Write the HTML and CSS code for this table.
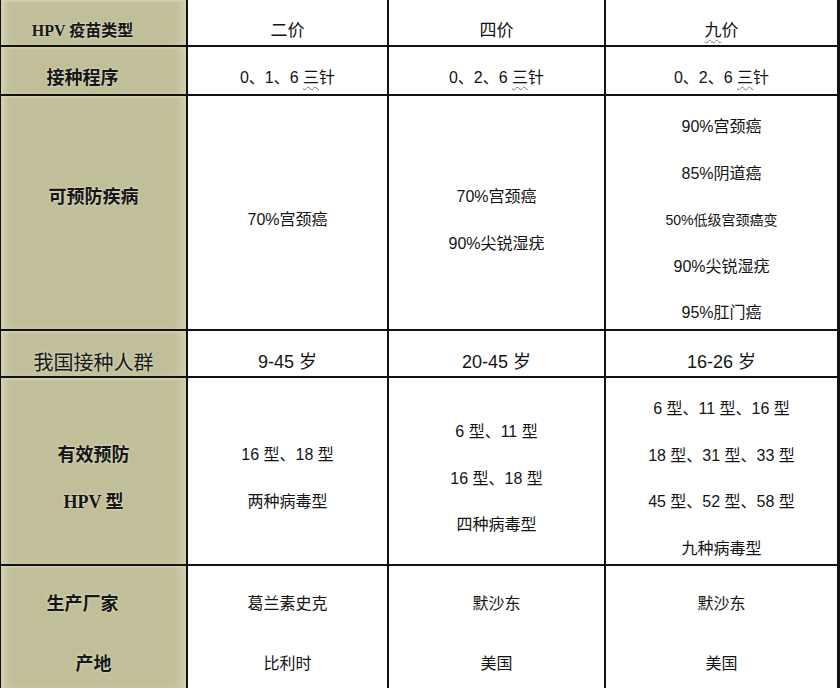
FILE: index.html
```html
<!DOCTYPE html>
<html lang="zh-CN">
<head>
<meta charset="utf-8">
<title>HPV 疫苗类型</title>
<link rel="stylesheet" href="styles.css">
</head>
<body>
<div class="table">
  <div class="cell head"><div class="ln shift">HPV 疫苗类型</div></div>
  <div class="cell"><div class="ln top">二价</div></div>
  <div class="cell"><div class="ln top">四价</div></div>
  <div class="cell"><div class="ln top"><span class="wavy">九</span>价</div></div>

  <div class="cell head"><div class="ln big shift">接种程序</div></div>
  <div class="cell"><div class="ln">0、1、6 <span class="wavy">三</span>针</div></div>
  <div class="cell"><div class="ln">0、2、6 <span class="wavy">三</span>针</div></div>
  <div class="cell"><div class="ln">0、2、6 <span class="wavy">三</span>针</div></div>

  <div class="cell head"><div class="ln big">可预防疾病</div><div class="ln"></div></div>
  <div class="cell"><div class="ln">70%宫颈癌</div></div>
  <div class="cell"><div class="ln">70%宫颈癌</div><div class="ln">90%尖锐湿疣</div></div>
  <div class="cell">
    <div class="ln">90%宫颈癌</div>
    <div class="ln">85%阴道癌</div>
    <div class="ln small">50%低级宫颈癌变</div>
    <div class="ln">90%尖锐湿疣</div>
    <div class="ln">95%肛门癌</div>
  </div>

  <div class="cell head"><div class="ln plain">我国接种人群</div></div>
  <div class="cell"><div class="ln age">9-45 岁</div></div>
  <div class="cell"><div class="ln age">20-45 岁</div></div>
  <div class="cell"><div class="ln age">16-26 岁</div></div>

  <div class="cell head"><div class="ln big">有效预防</div><div class="ln big">HPV 型</div></div>
  <div class="cell"><div class="ln">16 型、18 型</div><div class="ln">两种病毒型</div></div>
  <div class="cell"><div class="ln">6 型、11 型</div><div class="ln">16 型、18 型</div><div class="ln">四种病毒型</div></div>
  <div class="cell">
    <div class="ln">6 型、11 型、16 型</div>
    <div class="ln">18 型、31 型、33 型</div>
    <div class="ln">45 型、52 型、58 型</div>
    <div class="ln">九种病毒型</div>
  </div>

  <div class="cell head last"><div class="ln big shift">生产厂家</div><div class="ln big">产地</div></div>
  <div class="cell last"><div class="ln">葛兰素史克</div><div class="ln">比利时</div></div>
  <div class="cell last"><div class="ln">默沙东</div><div class="ln">美国</div></div>
  <div class="cell last"><div class="ln">默沙东</div><div class="ln">美国</div></div>
</div>
</body>
</html>
```
FILE: styles.css
```css
html, body {
  margin: 0;
  padding: 0;
  background: #ffffff;
}

.table {
  width: 840px;
  height: 688px;
  box-sizing: border-box;
  display: grid;
  grid-template-columns: 185px 199px 215px 231px;
  grid-template-rows: 45px 47px 233px 45px 186px 1fr;
  gap: 2px;
  padding: 0 3px 0 1px;
  background: #111111;
  overflow: hidden;
  font-family: "Liberation Sans", "Noto Sans CJK SC", sans-serif;
  color: #141414;
}

.cell {
  background: #ffffff;
  display: flex;
  flex-direction: column;
  justify-content: center;
  align-items: center;
  font-size: 16px;
}

.cell.head {
  background: #c1bf99;
  box-shadow: inset 7px 0 6px -3px #d6d4b8, inset -10px 0 8px -5px #d2d0b2, inset 0 2px 2px -1px #d8d6bd;
  font-family: "Liberation Serif", "Noto Sans CJK SC", serif;
  font-weight: bold;
  color: #161616;
}

.cell.last {
  justify-content: flex-start;
  padding-top: 7px;
  gap: 13px;
}

.ln {
  height: 46.6px;
  box-sizing: border-box;
  padding-top: 16px;
  line-height: 30px;
  white-space: nowrap;
  text-align: center;
}

.ln.top {
  font-size: 17px;
}

.ln.small {
  font-size: 14px;
}

.ln.age {
  font-size: 18px;
}

.head .ln {
  font-size: 16px;
  text-shadow: 0 0 3px rgba(235, 234, 215, 0.9);
}

.head .ln.big {
  font-size: 18px;
}

.head .ln.plain {
  font-family: "Noto Sans CJK SC", sans-serif;
  font-weight: normal;
  font-size: 20px;
}

.head .ln.shift {
  padding-right: 22px;
}

.wavy {
  text-decoration: underline wavy #777777;
  text-decoration-thickness: 1px;
  text-underline-offset: 3px;
}
```
